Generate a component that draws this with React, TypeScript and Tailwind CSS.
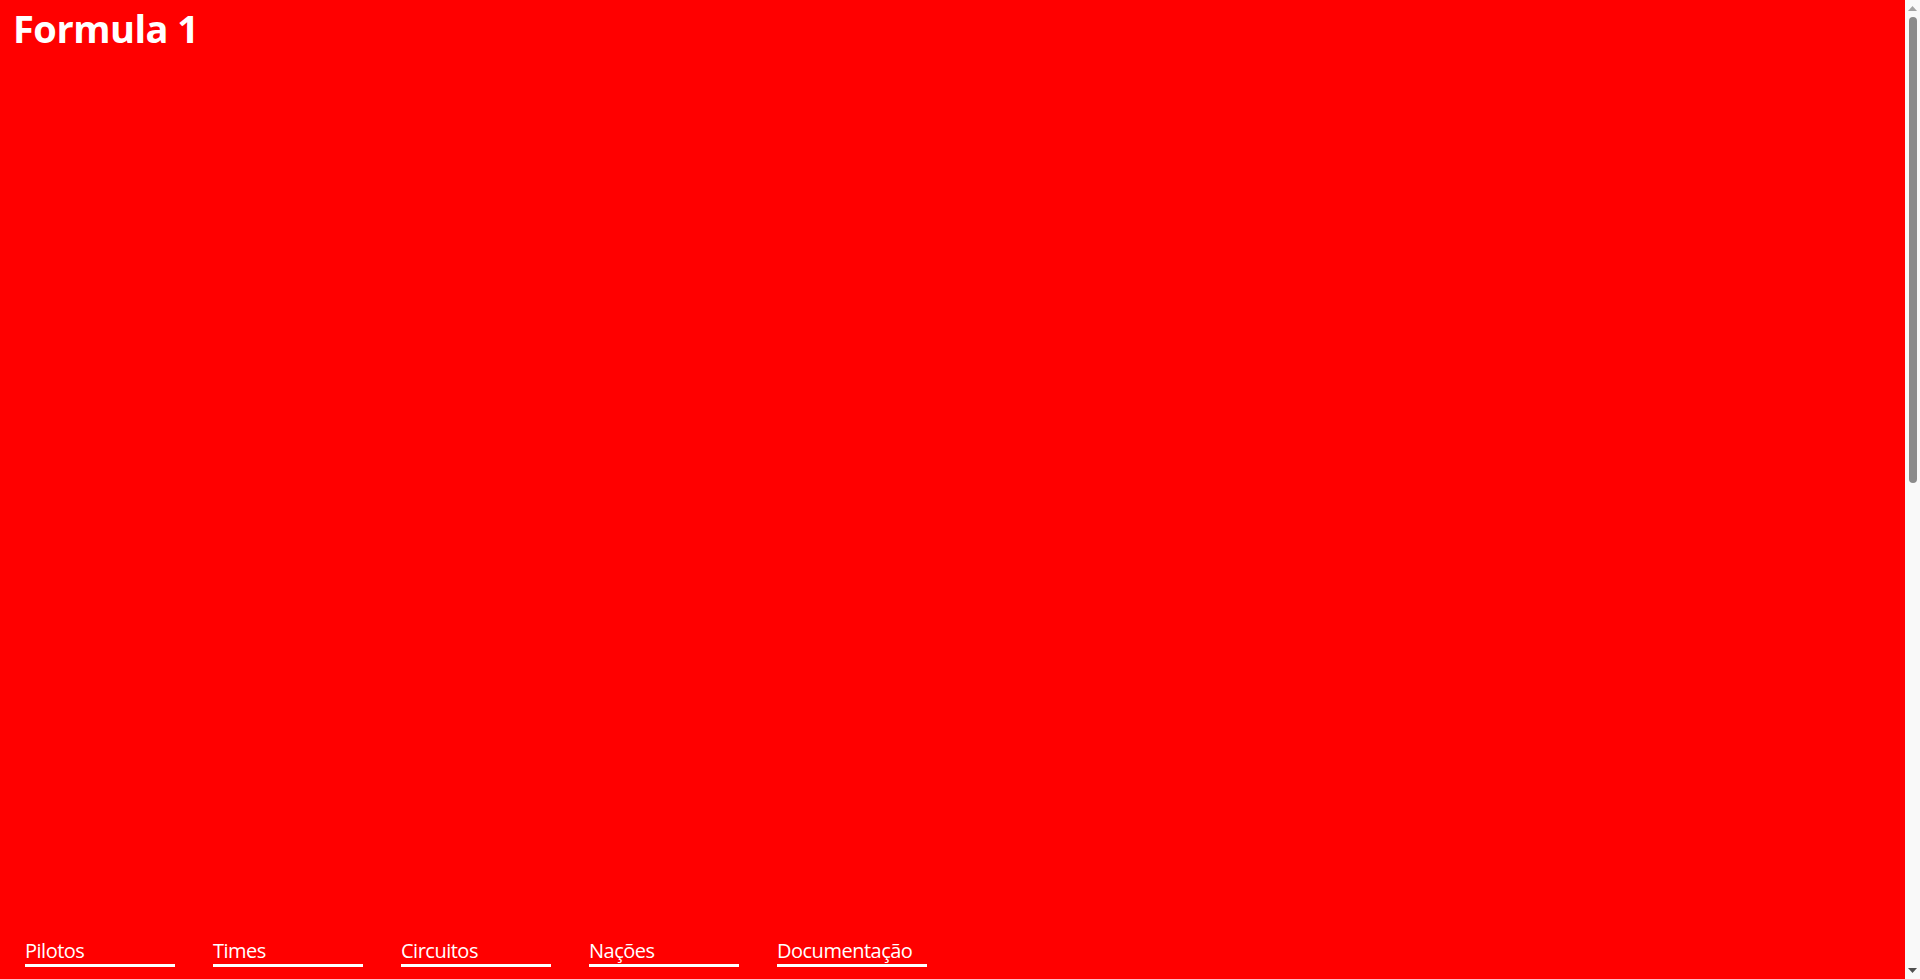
const links = ["Pilotos", "Times", "Circuitos", "Nações", "Documentação"];

export default function App() {
  return (
    <div className="flex h-screen overflow-hidden bg-[#ff0000] text-white font-['Open_Sans',sans-serif]">
      <header className="flex-1 flex flex-col justify-between">
        <h1 className="pl-[13px] pt-[4px] text-[38px] font-bold leading-[48px] tracking-[-0.5px]">
          Formula 1
        </h1>
        <nav className="flex gap-[38px] pl-[25px] pb-[12px]">
          {links.map((l) => (
            <a
              key={l}
              href="#"
              className="w-[150px] border-b-[3px] border-white text-[20px] leading-[26px] tracking-[-0.5px]"
            >
              {l}
            </a>
          ))}
        </nav>
      </header>

      {/* scrollbar */}
      <aside className="w-[15px] bg-[#f9f9f9] flex flex-col items-center">
        <svg width="9" height="5" viewBox="0 0 9 5" className="mt-[6px]">
          <path d="M4.5 0 L9 5 L0 5 Z" fill="#a3a3a3" />
        </svg>
        <div className="mt-[6px] w-[8px] h-[466px] rounded-full bg-[#8b8b8b]" />
        <div className="flex-1" />
        <svg width="9" height="5" viewBox="0 0 9 5" className="mb-[6px]">
          <path d="M0 0 L9 0 L4.5 5 Z" fill="#505050" />
        </svg>
      </aside>
    </div>
  );
}
